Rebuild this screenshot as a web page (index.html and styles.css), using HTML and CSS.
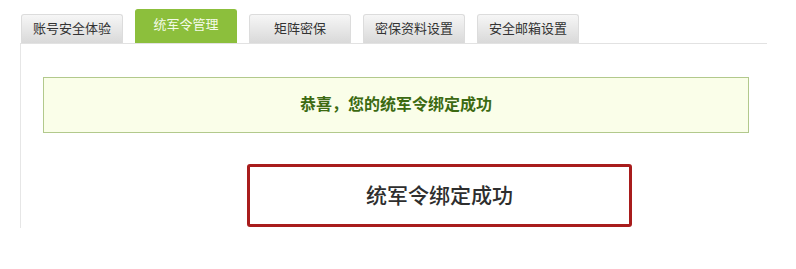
FILE: index.html
```html
<!DOCTYPE html>
<html lang="zh">
<head>
    <meta charset="utf-8"/>
    <title>统军令管理</title>
    <link rel="stylesheet" href="styles.css">
</head>
<body>
    <div class="wrap">
        <ul class="tabs">
            <li class="tab">账号安全体验</li>
            <li class="tab active">统军令管理</li>
            <li class="tab">矩阵密保</li>
            <li class="tab">密保资料设置</li>
            <li class="tab">安全邮箱设置</li>
        </ul>
        <div class="panel">
            <div class="notice">恭喜，您的统军令绑定成功</div>
            <div class="result">统军令绑定成功</div>
        </div>
    </div>
</body>
</html>
```

FILE: styles.css
```css
body {
    margin: 0;
    padding: 0;
    background: #fff;
    font-family: "Liberation Sans", "Noto Sans CJK SC", sans-serif;
    color: #333;
}
.wrap {
    width: 747px;
    margin-left: 20px;
    padding-top: 10px;
}
.tabs {
    display: flex;
    align-items: flex-end;
    gap: 12px;
    list-style: none;
    margin: 0;
    padding: 0 0 0 1px;
    height: 33px;
    border-bottom: 1px solid #e2e2e2;
}
.tab {
    width: 100px;
    height: 28px;
    line-height: 28px;
    text-align: center;
    font-size: 13px;
    color: #333;
    background: linear-gradient(#f6f6f6, #d9d9d9);
    border: 1px solid #dcdcdc;
    border-bottom: none;
    border-radius: 3px 3px 0 0;
}
.tab.active {
    height: 33px;
    line-height: 30px;
    color: #f4fbe8;
    background: #8cbf3c;
    border-color: #8cbf3c;
}
.panel {
    border-left: 1px solid #e6e6e6;
    height: 151px;
    padding: 33px 18px 0 22px;
}
.notice {
    height: 54px;
    line-height: 54px;
    text-align: center;
    font-size: 16px;
    font-weight: bold;
    color: #3c6a12;
    background: #fafee9;
    border: 1px solid #b2c98c;
}
.result {
    width: 379px;
    height: 57px;
    line-height: 57px;
    margin: 31px 0 0 204px;
    text-align: center;
    font-size: 21px;
    font-weight: 500;
    color: #2e2e2e;
    border: 3px solid #a81c1c;
    border-radius: 3px;
}
```
